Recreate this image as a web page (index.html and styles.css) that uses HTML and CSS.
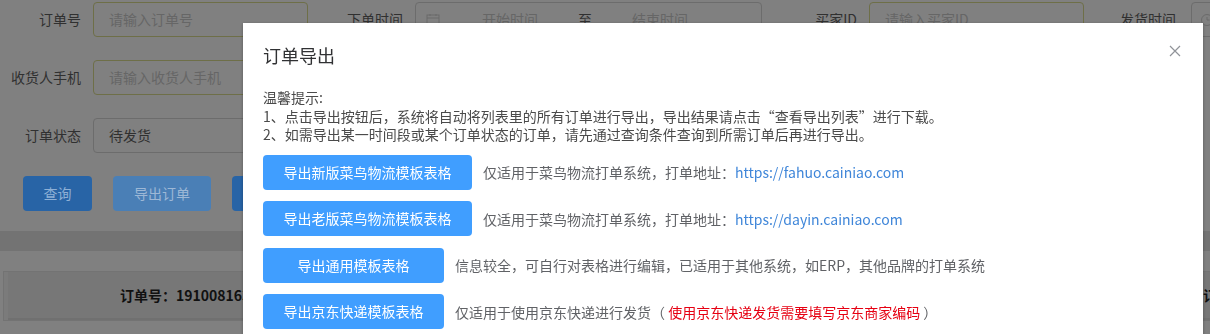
FILE: index.html
```html
<!DOCTYPE html>
<html lang="zh-CN">
<head>
<meta charset="utf-8">
<title>订单导出</title>
<link rel="stylesheet" href="styles.css">
</head>
<body>
<div class="page">
  <div class="form-row">
    <div class="item"><label class="lbl">订单号</label><div class="input w215 olive"><span class="ph">请输入订单号</span></div></div>
    <div class="item"><label class="lbl">下单时间</label>
      <div class="input date">
        <svg class="cal" width="14" height="14" viewBox="0 0 14 14"><rect x="1" y="2" width="12" height="11" fill="none" stroke="#666" stroke-width="1"/><line x1="1" y1="5" x2="13" y2="5" stroke="#666"/><line x1="4" y1="1" x2="4" y2="3" stroke="#666"/><line x1="10" y1="1" x2="10" y2="3" stroke="#666"/></svg>
        <span class="ph dr">开始时间</span><span class="sep">至</span><span class="ph dr">结束时间</span>
      </div>
    </div>
    <div class="item"><label class="lbl">买家ID</label><div class="input w215 olive"><span class="ph">请输入买家ID</span></div></div>
    <div class="item"><label class="lbl">发货时间</label>
      <div class="input date narrow-date">
        <svg class="cal" width="14" height="14" viewBox="0 0 14 14"><circle cx="7" cy="7" r="5.5" fill="none" stroke="#666"/><path d="M7 4 V7 H9.5" fill="none" stroke="#666"/></svg>
      </div>
    </div>
  </div>
  <div class="form-row">
    <div class="item"><label class="lbl">收货人手机</label><div class="input w215 olive"><span class="ph">请输入收货人手机</span></div></div>
  </div>
  <div class="form-row">
    <div class="item"><label class="lbl">订单状态</label><div class="input w215"><span class="val">待发货</span></div></div>
  </div>
  <div class="tools">
    <span class="bg-btn b-query">查询</span>
    <span class="bg-btn b-light">导出订单</span>
    <span class="bg-btn b-dark">查看导出列表</span>
  </div>
  <div class="band"></div>
  <div class="card">
    <div class="card-head"><span class="ono">订单号：1910081634562318</span><span class="ono right">订</span></div>
  </div>
</div>

<div class="dialog">
  <div class="dlg-head">
    <span class="dlg-title">订单导出</span>
    <svg class="close" width="12" height="12" viewBox="0 0 12 12"><path d="M1 1 L11 11 M11 1 L1 11" stroke="#909399" stroke-width="1.2" fill="none"/></svg>
  </div>
  <div class="dlg-body">
    <p class="tip">温馨提示:</p>
    <p class="tip">1、点击导出按钮后，系统将自动将列表里的所有订单进行导出，导出结果请点击“查看导出列表”进行下载。</p>
    <p class="tip">2、如需导出某一时间段或某个订单状态的订单，请先通过查询条件查询到所需订单后再进行导出。</p>
    <div class="rows">
      <div class="row"><span class="btn wide">导出新版菜鸟物流模板表格</span><span class="desc">仅适用于菜鸟物流打单系统，打单地址：<a class="link">https://fahuo.cainiao.com</a></span></div>
      <div class="row"><span class="btn wide">导出老版菜鸟物流模板表格</span><span class="desc">仅适用于菜鸟物流打单系统，打单地址：<a class="link">https://dayin.cainiao.com</a></span></div>
      <div class="row"><span class="btn narrow">导出通用模板表格</span><span class="desc">信息较全，可自行对表格进行编辑，已适用于其他系统，如ERP，其他品牌的打单系统</span></div>
      <div class="row"><span class="btn narrow">导出京东快递模板表格</span><span class="desc">仅适用于使用京东快递进行发货（ <span class="red">使用京东快递发货需要填写京东商家编码</span> ）</span></div>
    </div>
  </div>
</div>
</body>
</html>
```
FILE: styles.css
```css
* { box-sizing: border-box; }
html, body { margin: 0; padding: 0; }
body {
  width: 1210px; height: 334px; overflow: hidden;
  background: #808080;
  font-family: "Noto Sans CJK SC", "Noto Sans", sans-serif;
  font-size: 14px;
}
.page { padding-top: 2px; }
.form-row { display: flex; height: 35px; margin-bottom: 23px; white-space: nowrap; }
.item { display: flex; margin-right: 14px; flex: none; }
.lbl {
  width: 93px; padding-right: 12px; text-align: right;
  line-height: 35px; color: #303030;
}
.item:nth-child(4) .lbl { padding-right: 15px; }
.input {
  height: 35px; border: 1px solid #6c6c6c; border-radius: 4px;
  padding: 0 15px; line-height: 33px; display: flex; align-items: center;
}
.w215 { width: 215px; }
.olive { border-color: #6e6f48; }
.ph { color: #666; }
.val { color: #303030; }
.date { width: 347px; padding: 0 10px; }
.narrow-date { width: 200px; padding: 0 8px; }
.cal { flex: none; margin-right: 10px; opacity: .8; }
.dr { width: 120px; text-align: center; }
.sep { color: #303030; width: 30px; text-align: center; }
.tools { display: flex; gap: 21px; padding-left: 23px; margin-top: 1px; }
.bg-btn {
  height: 35px; line-height: 35px; border-radius: 4px; padding: 0 20px;
  color: #8eb0d6; background: #2864a6; white-space: nowrap;
}
.b-query { width: 69px; text-align: center; padding: 0; }
.b-light { width: 98px; text-align: center; padding: 0; background: #4a7fb6; color: #9db8d6; }
.b-dark { background: #2864a6; }
.band { height: 20px; background: #737373; margin-top: 20px; }
.card {
  margin: 20px 0 0 3px; border: 1px solid #737373; border-right: 0;
  background: #7b7b7b; padding-left: 4px;
}
.card-head {
  height: 48px; background: #777; display: flex; align-items: center;
  justify-content: space-between; padding-left: 112px; padding-right: 0;
  border-bottom: 2px solid #707070;
}
.ono { font-weight: bold; color: #111; }
.right { margin-right: -7px; }

.dialog {
  position: fixed; left: 243px; top: 23px; width: 960px; height: 340px;
  background: #fff; box-shadow: 0 1px 3px rgba(0,0,0,.3);
}
.dlg-head { position: relative; padding: 20px 20px 10px; }
.dlg-title { display: block; font-size: 18px; line-height: 24px; color: #303133; }
.close { position: absolute; right: 22px; top: 22px; }
.dlg-body { padding: 11px 20px 0; }
.tip { margin: 0; line-height: 18.5px; color: #4a4a4a; white-space: nowrap; }
.rows { margin-top: 11px; display: flex; flex-direction: column; gap: 11.5px; }
.row { display: flex; align-items: center; }
.btn {
  height: 35px; line-height: 35px; border-radius: 4px; background: #409eff;
  color: #fff; text-align: center; flex: none;
}
.wide { width: 209px; }
.narrow { width: 181px; }
.desc { margin-left: 11px; color: #606266; white-space: nowrap; }
.link { color: #3f86d9; }
.red { color: #e60012; }
```
